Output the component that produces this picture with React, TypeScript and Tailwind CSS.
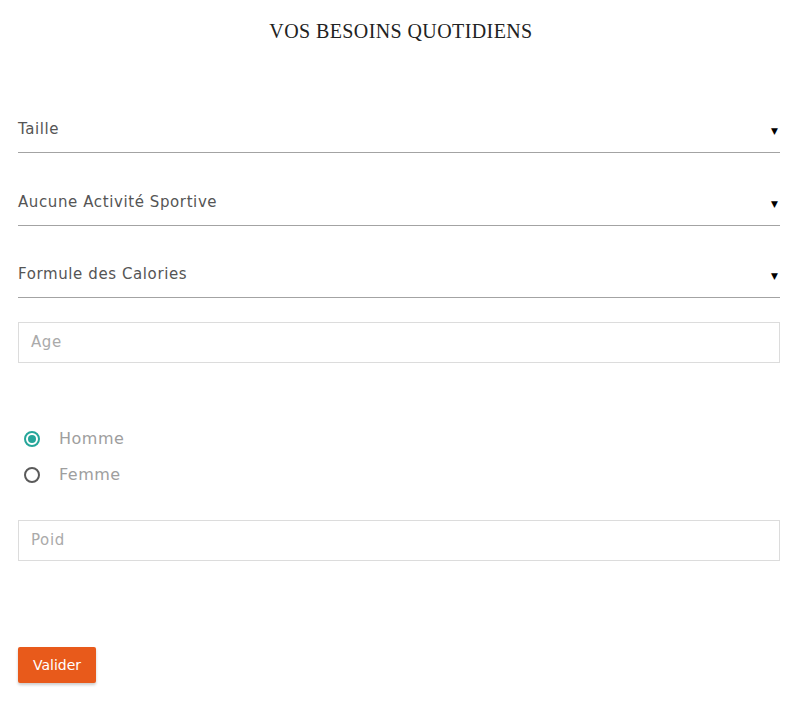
import React from 'react';

const selects = ['Taille', 'Aucune Activité Sportive', 'Formule des Calories'];

const body = { fontFamily: '"DejaVu Sans", "Noto Sans", sans-serif' };

const App: React.FC = () => {
  return (
    <div className="min-h-screen bg-white pt-[20px]" style={body}>
      <h1
        className="h-[22px] text-center text-[20px] leading-[22px] text-[#222] tracking-[0.4px]"
        style={{ fontFamily: '"Liberation Serif", "DejaVu Serif", serif' }}
      >
        VOS BESOINS QUOTIDIENS
      </h1>

      <form className="ml-[18px] w-[762px]" onSubmit={(e) => e.preventDefault()}>
        {/* Dropdowns */}
        {selects.map((label, i) => (
          <div
            key={label}
            className={`flex h-[46px] items-center justify-between border-b border-[#a3a3a3] ${
              i === 0 ? 'mt-[65px]' : i === 1 ? 'mt-[27px]' : 'mt-[26px]'
            }`}
          >
            <span className="text-[15px] tracking-[0.6px] text-[#555]">{label}</span>
            <span className="mr-[2px] mt-[4px] text-[9px] text-black">▼</span>
          </div>
        ))}

        {/* Age */}
        <div className="mt-[24px] flex h-[41px] items-center border border-[#dcdcdc] pl-[12px]">
          <span className="text-[15px] tracking-[0.6px] text-[#aaa]">Age</span>
        </div>

        {/* Sexe */}
        <div className="mt-[64px] flex flex-col gap-3">
          <label className="flex h-[24px] items-center">
            <span className="ml-[6px] flex h-[16px] w-[16px] items-center justify-center rounded-full border-2 border-[#26a69a]">
              <span className="h-[8px] w-[8px] rounded-full bg-[#26a69a]" />
            </span>
            <span className="ml-[19px] text-[16px] tracking-[0.5px] text-[#9e9e9e]">Homme</span>
          </label>
          <label className="flex h-[24px] items-center">
            <span className="ml-[6px] h-[16px] w-[16px] rounded-full border-2 border-[#5a5a5a]" />
            <span className="ml-[19px] text-[16px] tracking-[0.5px] text-[#9e9e9e]">Femme</span>
          </label>
        </div>

        {/* Poid */}
        <div className="mt-[33px] flex h-[41px] items-center border border-[#dcdcdc] pl-[12px]">
          <span className="text-[15px] tracking-[0.6px] text-[#aaa]">Poid</span>
        </div>

        <button
          type="submit"
          className="mt-[86px] flex h-[36px] w-[78px] items-center justify-center rounded-[2px] bg-[#e85a1b] text-[14px] text-white shadow-[0_2px_3px_rgba(0,0,0,0.2)]"
        >
          Valider
        </button>
      </form>
    </div>
  );
};

export default App;
